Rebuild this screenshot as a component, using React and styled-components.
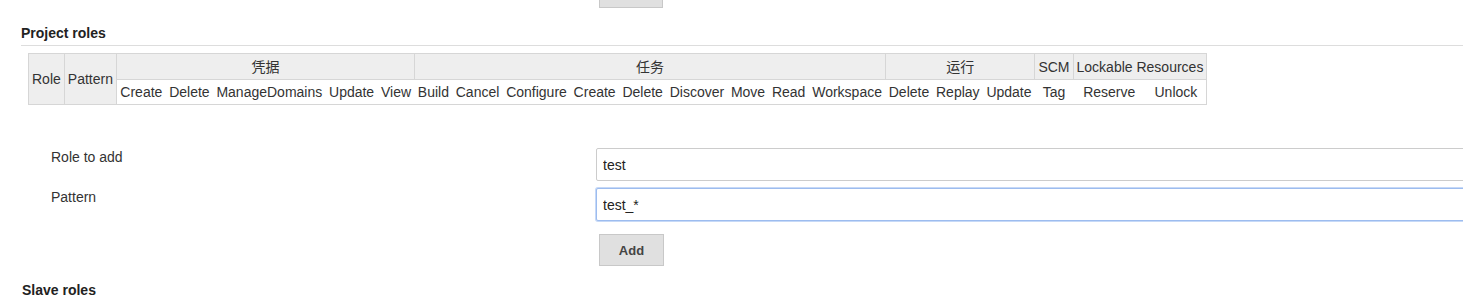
import React from "react";
import styled, { createGlobalStyle } from "styled-components";

const Global = createGlobalStyle`
  html, body { margin: 0; padding: 0; background: #fff; overflow: hidden; }
  body { font-family: "Liberation Sans", Arial, "Noto Sans CJK SC", sans-serif; font-size: 14px; color: #333; }
`;

const Page = styled.div`
  width: 1463px;
  height: 300px;
  overflow: hidden;
`;

const TopButtonStub = styled.div`
  margin-left: 599px;
  width: 62px;
  height: 7px;
  background: #e0e0e0;
  border: 1px solid #c8c8c8;
  border-top: none;
`;

const SectionHeading = styled.h3`
  margin: ${(p) => p.$top || 0}px 0 0 ${(p) => p.$left || 21}px;
  font-size: 14px;
  font-weight: bold;
  color: #222;
  line-height: 16px;
  padding-bottom: ${(p) => (p.$rule ? 4 : 0)}px;
  border-bottom: ${(p) => (p.$rule ? "1px solid #ddd" : "none")};
`;

const MatrixWrap = styled.div`
  margin: 7px 0 0 28px;
`;

const Matrix = styled.table`
  border-collapse: collapse;
  font-size: 14px;
  color: #333;
`;

const HeadCell = styled.th`
  font-weight: normal;
  background: #eeeeee;
  border: 1px solid #d6d6d6;
  padding: 3px 3px;
  height: 19px;
  line-height: 18px;
  text-align: center;
  white-space: nowrap;
`;

const PermCell = styled.td`
  background: #fff;
  border-top: 1px solid #d6d6d6;
  border-bottom: 1px solid #d6d6d6;
  border-right: ${(p) => (p.$last ? "1px solid #d6d6d6" : "none")};
  padding: 3px 3.4px;
  height: 18px;
  line-height: 18px;
  text-align: center;
  white-space: nowrap;
`;

const Form = styled.div`
  margin-top: 43px;
  display: flex;
  flex-direction: column;
  gap: 7px;
`;

const FormRow = styled.div`
  display: flex;
  align-items: flex-start;
`;

const Label = styled.label`
  flex-shrink: 0;
  box-sizing: border-box;
  width: 596px;
  padding-left: 51px;
  padding-top: 1px;
  font-size: 14px;
  line-height: 16px;
  color: #333;
`;

const TextInput = styled.input`
  flex-shrink: 0;
  box-sizing: border-box;
  width: 900px;
  height: 33px;
  padding: 0 6px;
  font-family: "Liberation Sans", Arial, sans-serif;
  font-size: 14px;
  color: #222;
  background: #fff;
  border: 1px solid ${(p) => (p.$focused ? "#9dbcef" : "#cccccc")};
  box-shadow: ${(p) => (p.$focused ? "0 0 0 1px #c6d9f7" : "none")};
  border-radius: 2px;
  outline: none;
`;

const ButtonRow = styled.div`
  padding-left: 599px;
  margin-top: 13px;
`;

const AddButton = styled.button`
  display: block;
  box-sizing: border-box;
  width: 65px;
  height: 32px;
  background: #e0e0e0;
  border: 1px solid #c8c8c8;
  border-radius: 0;
  font-family: "Liberation Sans", Arial, sans-serif;
  font-size: 13px;
  font-weight: bold;
  color: #444;
`;

const groups = [
  { name: "凭据", perms: ["Create", "Delete", "ManageDomains", "Update", "View"] },
  { name: "任务", perms: ["Build", "Cancel", "Configure", "Create", "Delete", "Discover", "Move", "Read", "Workspace"] },
  { name: "运行", perms: ["Delete", "Replay", "Update"] },
  { name: "SCM", perms: ["Tag"] },
  { name: "Lockable Resources", perms: ["Reserve", "Unlock"] },
];

export default function App() {
  const all = groups.flatMap((g) => g.perms);
  return (
    <Page>
      <Global />
      <TopButtonStub />
      <SectionHeading $top={17} $rule>Project roles</SectionHeading>
      <MatrixWrap>
        <Matrix>
          <thead>
            <tr>
              <HeadCell rowSpan={2}>Role</HeadCell>
              <HeadCell rowSpan={2}>Pattern</HeadCell>
              {groups.map((g) => (
                <HeadCell key={g.name} colSpan={g.perms.length}>{g.name}</HeadCell>
              ))}
            </tr>
            <tr>
              {all.map((p, i) => (
                <PermCell key={i} $last={i === all.length - 1}>{p}</PermCell>
              ))}
            </tr>
          </thead>
        </Matrix>
      </MatrixWrap>
      <Form>
        <FormRow>
          <Label>Role to add</Label>
          <TextInput defaultValue="test" />
        </FormRow>
        <FormRow>
          <Label>Pattern</Label>
          <TextInput $focused defaultValue="test_*" />
        </FormRow>
      </Form>
      <ButtonRow>
        <AddButton>Add</AddButton>
      </ButtonRow>
      <SectionHeading $top={16} $left={22}>Slave roles</SectionHeading>
    </Page>
  );
}
